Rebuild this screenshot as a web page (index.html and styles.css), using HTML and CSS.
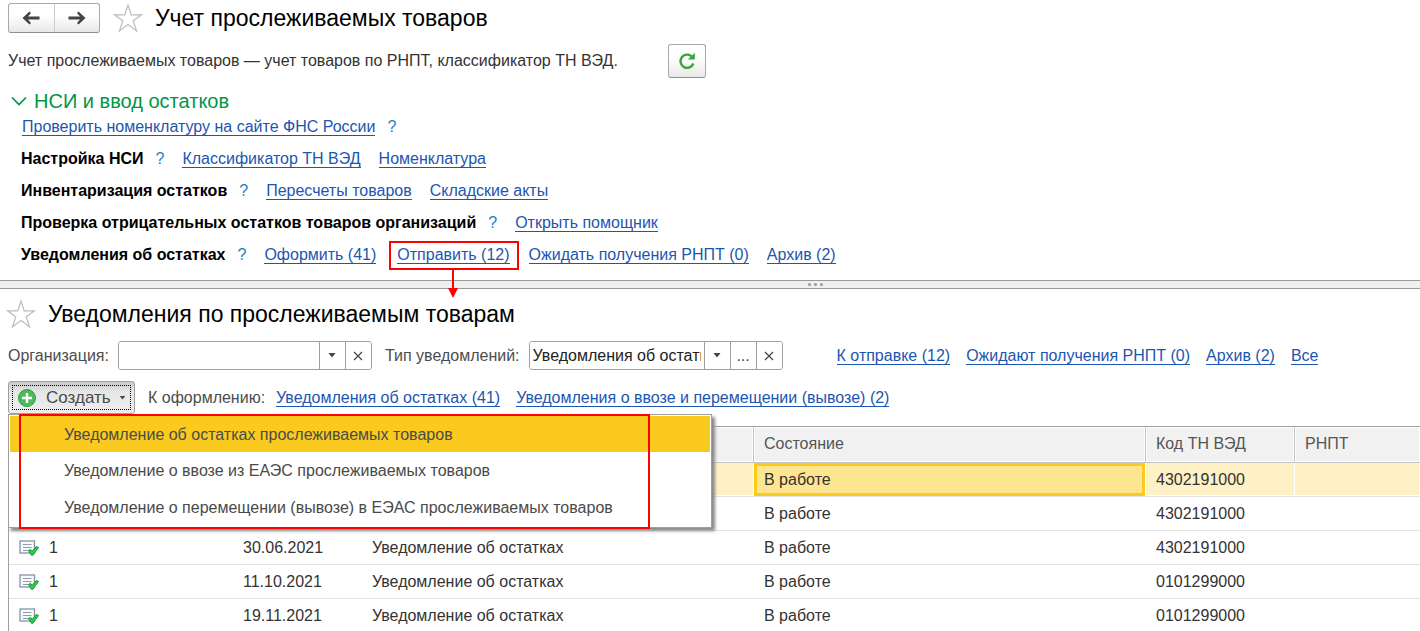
FILE: index.html
```html
<!DOCTYPE html>
<html lang="ru">
<head>
<meta charset="utf-8">
<title>Учет прослеживаемых товаров</title>
<link rel="stylesheet" href="styles.css">
</head>
<body>
<svg class="defs" aria-hidden="true">
  <symbol id="star" viewBox="0 0 30 30"><path d="M15 2 L18.2 11.8 H28.5 L20.2 17.8 L23.6 28 L15 21.6 L6.4 28 L9.8 17.8 L1.5 11.8 H11.8 Z" fill="#fff" stroke="#b9bec4" stroke-width="1.2"/></symbol>
  <symbol id="down" viewBox="0 0 8 5"><path d="M0.500 0 H7.500 L4 4.500 Z" fill="#444"/></symbol>
  <symbol id="cross" viewBox="0 0 10 10"><path d="M1 1 L9 9 M9 1 L1 9" fill="none" stroke="#444" stroke-width="1.2"/></symbol>
  <symbol id="doc" viewBox="0 0 20 16">
    <rect x="1" y="1" width="14.500" height="12" fill="#f8fafc" stroke="#8393ab" stroke-width="1.300"/>
    <path d="M4 4.500 H12.500 M4 7.500 H12.500 M4 10.500 H9" stroke="#8b9bb2"/>
    <path d="M9.500 10.500 L11.500 9.500 L13.200 11.300 L17.300 6.500 L19.500 7.500 C17.500 10 16 12.500 13.800 15.300 H12.500 Z" fill="#2fd04a" stroke="#12912b"/>
  </symbol>
</svg>
<main class="app">
  <section class="top">
    <header class="title-row">
      <div class="nav">
        <button type="button" aria-label="Назад"><svg width="18" height="14" viewBox="0 0 18 14"><path d="M0.500 7 L7.500 0.500 L9 2 L6 5.500 H17.500 V8.500 H6 L9 12 L7.500 13.500 Z" fill="#444"/></svg></button>
        <button type="button" aria-label="Вперед"><svg width="18" height="14" viewBox="0 0 18 14"><path d="M17.500 7 L10.500 0.500 L9 2 L12 5.500 H0.500 V8.500 H12 L9 12 L10.500 13.500 Z" fill="#444"/></svg></button>
      </div>
      <svg class="star" width="30" height="30"><use href="#star"/></svg>
      <h1>Учет прослеживаемых товаров</h1>
    </header>
    <div class="about">
      <p>Учет прослеживаемых товаров — учет товаров по РНПТ, классификатор ТН ВЭД.</p>
      <button type="button" class="refresh" aria-label="Обновить"><svg width="18" height="18" viewBox="0 0 18 18"><path d="M15.300 11.500 A6.600 6.600 0 1 1 13.500 4.300" fill="none" stroke="#35a637" stroke-width="2.400"/><path d="M16.800 0.800 V7.500 H10 Z" fill="#35a637"/></svg></button>
    </div>
    <h2><svg width="16" height="10" viewBox="0 0 16 10"><path d="M1 1.500 L8 8.500 L15 1.500" fill="none" stroke="#009646" stroke-width="1.700"/></svg>НСИ и ввод остатков</h2>
    <ul class="tasks">
      <li><a class="indent" href="#">Проверить номенклатуру на сайте ФНС России</a><span class="q">?</span></li>
      <li><b>Настройка НСИ</b><span class="q">?</span><a href="#">Классификатор ТН ВЭД</a><a href="#">Номенклатура</a></li>
      <li><b>Инвентаризация остатков</b><span class="q">?</span><a href="#">Пересчеты товаров</a><a href="#">Складские акты</a></li>
      <li><b>Проверка отрицательных остатков товаров организаций</b><span class="q">?</span><a href="#">Открыть помощник</a></li>
      <li><b>Уведомления об остатках</b><span class="q">?</span><a href="#">Оформить (41)</a><span class="marked"><a href="#">Отправить (12)</a><svg class="arrow" width="12" height="28" viewBox="0 0 12 28"><path d="M6 0 V19" stroke="#f00" stroke-width="2"/><path d="M1 18 H11 L6 28 Z" fill="#f00"/></svg></span><a href="#">Ожидать получения РНПТ (0)</a><a href="#">Архив (2)</a></li>
    </ul>
  </section>
  <div class="splitter"><i></i><i></i><i></i></div>
  <section class="bottom">
    <header class="title-row list-title">
      <svg class="star" width="30" height="30"><use href="#star"/></svg>
      <h1>Уведомления по прослеживаемым товарам</h1>
    </header>
    <div class="filters">
      <label for="org">Организация:</label>
      <div class="field"><input id="org" type="text"><button type="button" aria-label="Выбрать"><svg width="8" height="5"><use href="#down"/></svg></button><button type="button" aria-label="Очистить"><svg width="10" height="10"><use href="#cross"/></svg></button></div>
      <label for="kind">Тип уведомлений:</label>
      <div class="field"><input id="kind" type="text" value="Уведомления об остатках"><button type="button" aria-label="Выбрать"><svg width="8" height="5"><use href="#down"/></svg></button><button type="button">...</button><button type="button" aria-label="Очистить"><svg width="10" height="10"><use href="#cross"/></svg></button></div>
      <nav class="links states"><a href="#">К отправке (12)</a><a href="#">Ожидают получения РНПТ (0)</a><a href="#">Архив (2)</a><a href="#">Все</a></nav>
    </div>
    <div class="commands">
      <div class="create-box">
        <button type="button" class="create"><span><svg width="18" height="18" viewBox="0 0 18 18"><circle cx="9" cy="9" r="8.500" fill="#4dbb5b" stroke="#2fa041"/><path d="M9 4 V14 M4 9 H14" stroke="#fff" stroke-width="2.400"/></svg>Создать<svg class="caret" width="7" height="4" viewBox="0 0 8 5"><use href="#down"/></svg></span></button>
        <div class="menu">
          <button type="button" class="current">Уведомление об остатках прослеживаемых товаров</button>
          <button type="button">Уведомление о ввозе из ЕАЭС прослеживаемых товаров</button>
          <button type="button">Уведомление о перемещении (вывозе) в ЕЭАС прослеживаемых товаров</button>
          <div class="frame"></div>
        </div>
      </div>
      <span class="caption">К оформлению:</span>
      <nav class="links"><a href="#">Уведомления об остатках (41)</a><a href="#">Уведомления о ввозе и перемещении (вывозе) (2)</a></nav>
    </div>
    <table>
      <colgroup><col class="c-num"><col class="c-date"><col class="c-kind"><col class="c-state"><col class="c-code"><col></colgroup>
      <thead><tr><th></th><th></th><th></th><th>Состояние</th><th>Код ТН ВЭД</th><th>РНПТ</th></tr></thead>
      <tbody>
        <tr class="selected"><td></td><td></td><td></td><td class="active">В работе</td><td>4302191000</td><td></td></tr>
        <tr><td></td><td></td><td></td><td>В работе</td><td>4302191000</td><td></td></tr>
        <tr><td><svg width="20" height="16"><use href="#doc"/></svg>1</td><td>30.06.2021</td><td>Уведомление об остатках</td><td>В работе</td><td>4302191000</td><td></td></tr>
        <tr><td><svg width="20" height="16"><use href="#doc"/></svg>1</td><td>11.10.2021</td><td>Уведомление об остатках</td><td>В работе</td><td>0101299000</td><td></td></tr>
        <tr><td><svg width="20" height="16"><use href="#doc"/></svg>1</td><td>19.11.2021</td><td>Уведомление об остатках</td><td>В работе</td><td>0101299000</td><td></td></tr>
      </tbody>
    </table>
  </section>
</main>
</body>
</html>
```

FILE: styles.css
```css
* { box-sizing: border-box; }
body { margin: 0; background: #fff; color: #333; font: 16px/20px "Liberation Sans", Arial, sans-serif; white-space: nowrap; }
button, input { font: inherit; color: #4a4a4a; }
button { padding: 0; display: flex; align-items: center; justify-content: center; }
h1, h2, p, ul { margin: 0; padding: 0; font-weight: normal; }
a { color: #1c56b0; text-decoration: none; border-bottom: 1px solid #1c56b0; line-height: 17px; }
.defs { position: absolute; width: 0; height: 0; }
.app { height: 100vh; overflow: hidden; }

.top { height: 280px; padding: 3px 8px 0; }
.title-row { display: flex; align-items: center; height: 30px; }
.title-row h1 { font-size: 23px; line-height: 30px; color: #000; }
.title-row .star { margin-right: 12px; }
.nav { display: flex; width: 92px; height: 30px; margin-right: 13px; border: 1px solid #a8a8a8; border-bottom-color: #8e8e8e; border-radius: 3px; background: linear-gradient(#fff 40%, #e8e8e8); }
.nav button { flex: 1; border: 0; background: none; }
.nav button + button { border-left: 1px solid #ccc; }
.about { display: flex; align-items: center; gap: 50px; height: 34px; margin-top: 11px; }
.refresh { width: 38px; height: 34px; border: 1px solid #a8a8a8; border-bottom-color: #8e8e8e; border-radius: 3px; background: linear-gradient(#fff 40%, #e8e8e8); }
h2 { display: flex; align-items: center; gap: 7px; margin-top: 12px; padding-left: 3px; font-size: 20px; line-height: 22px; color: #009646; }
.tasks { list-style: none; padding: 1px 0 0 13px; }
.tasks li { display: flex; align-items: center; height: 32px; }
.tasks li:first-child { height: 28px; margin-bottom: 2px; }
.tasks b { color: #000; }
.tasks a + a, .tasks .q + a { margin-left: 18px; }
.indent { margin-left: 1px; }
.q { margin-left: 12px; color: #1a7fc0; }
.tasks .marked { position: relative; display: flex; align-items: center; height: 29px; padding: 0 7px 0 6px; margin-left: 13px; border: 2px solid #f00; }
.tasks .marked + a { margin-left: 10px; }
.arrow { position: absolute; left: 56px; top: 27px; z-index: 1; }

.splitter { display: flex; align-items: center; justify-content: center; gap: 3px; height: 9px; padding-left: 210px; border: solid #999; border-width: 1px 0; background: #f0eff0; }
.splitter i { width: 3px; height: 3px; border-radius: 2px; background: #999; }

.bottom { padding: 10px 0 0 8px; }
.list-title { margin-left: -2px; }
.list-title + .filters { margin-top: 12px; }
.filters { display: flex; align-items: center; height: 29px; color: #4d4d4d; }
.field { display: flex; width: 254px; height: 29px; margin: 0 13px 0 9px; border: 1px solid #a0a0a0; border-radius: 3px; overflow: hidden; }
.field input { flex: 1; min-width: 0; padding: 0 3px; border: 0; outline: 0; color: #222; }
.field button { width: 26px; border: 0; border-left: 1px solid #a0a0a0; background: #fff; }
.links { display: flex; gap: 16px; }
.states { margin-left: 41px; }
.commands { display: flex; align-items: center; height: 33px; margin-top: 11px; color: #4d4d4d; }
.create-box { position: relative; margin-right: 13px; }
.create { width: 127px; height: 33px; padding: 3px; border: 1px solid #a0a0a0; border-radius: 3px; background: linear-gradient(#c9c9c9, #e6e6e6 30%, #eee); font-size: 17px; }
.create span { display: flex; flex: 1; align-items: center; height: 25px; padding: 0 4px 0 5px; border: 1px dotted #000; }
.create svg { margin-right: 10px; }
.create .caret { margin: 0 0 0 auto; }
.caption { margin-right: 11px; }
.menu { position: absolute; z-index: 2; top: 33px; left: 0; width: 704px; padding: 1px; border: 1px solid #a0a0a0; background: #fff; box-shadow: 3px 3px 3px #888; }
.menu button { width: 100%; height: 37px; padding: 1px 0 0 54px; justify-content: flex-start; border: 0; background: #fff; }
.menu .current { height: 36px; background: #faca1e; }
.frame { position: absolute; top: -1px; left: 10px; width: 631px; height: 115px; border: 2px solid #f00; pointer-events: none; }

table { width: 100%; margin-top: 12px; border-collapse: separate; border-spacing: 0; table-layout: fixed; border: 1px solid #a0a0a0; border-width: 1px 0 0 1px; }
.c-num { width: 224px; }
.c-date { width: 129px; }
.c-kind { width: 392px; }
.c-state { width: 392px; }
.c-code { width: 149px; }
th { height: 36px; padding: 0 10px 2px; text-align: left; font-weight: normal; color: #555; background: #f1f1f1; border-right: 1px solid #c4c4c4; border-bottom: 1px solid #c4c4c4; box-shadow: inset 0 0 0 1px #fff; }
th:last-child { border-right: 0; }
td { height: 34px; padding: 0 10px; border-bottom: 1px solid #e2e2e2; }
td svg { margin-right: 10px; vertical-align: -3px; }
.selected td { background: #fdf1c5; border-right: 1px solid #fff; box-shadow: inset 0 -1px #fff; }
.selected .active { background: #fee591; box-shadow: inset 0 0 0 3px #faca1e; }
```
